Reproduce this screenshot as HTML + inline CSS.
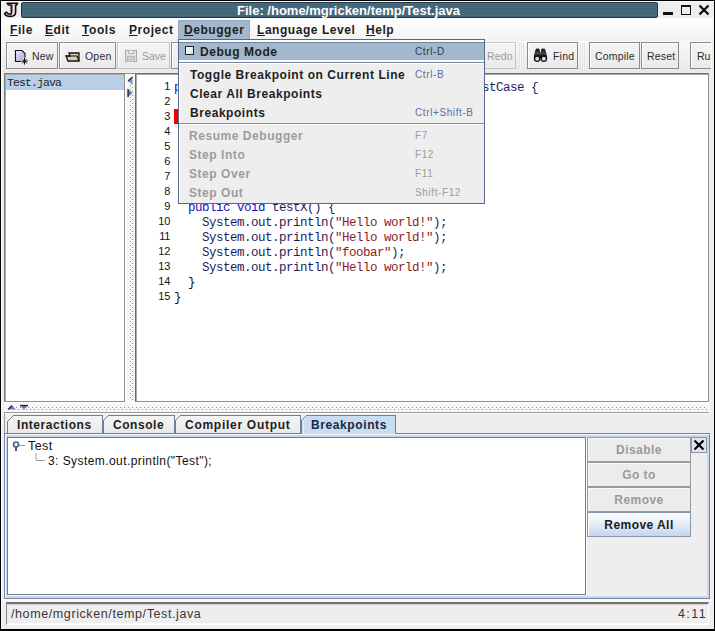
<!DOCTYPE html>
<html><head><meta charset="utf-8">
<style>
*{margin:0;padding:0;box-sizing:border-box}
html,body{width:715px;height:631px;overflow:hidden;background:#000}
body{position:relative;font-family:"Liberation Sans",sans-serif}
.a{position:absolute}
.t{position:absolute;white-space:pre;line-height:1}
.mb{font-weight:bold;font-size:12px;letter-spacing:0.55px;color:#1e1e1e}
.u{text-decoration:underline;text-underline-offset:1px}
.mono{font-family:"Liberation Mono",monospace}
.btn{position:absolute;top:42px;height:27px;border:1px solid #8a8a8a;background:linear-gradient(#f4f4f4,#eaeaea);box-shadow:inset 1px 1px 0 #fff}
.btn.dis{border-color:#c4c4c4}
.bt{position:absolute;white-space:pre;line-height:1;font-size:10.5px;letter-spacing:0.2px;color:#2c2c2c;top:51px}
.acc{position:absolute;white-space:pre;line-height:1;font-size:10px;letter-spacing:0.6px;color:#5c6e9a;left:415px}
.code{position:absolute;white-space:pre;line-height:15px;font-family:"Liberation Mono",monospace;font-size:12.5px;letter-spacing:-0.5px;color:#1e1e5a}
.ln{position:absolute;white-space:pre;line-height:15px;font-family:"Liberation Sans",sans-serif;font-size:11px;letter-spacing:-0.3px;color:#111;text-align:right}
.s{color:#8b1c1c}
.kw{color:#1515b8}
.blk{color:#111}
.tab{position:absolute;top:415px;height:19px;border-top:1px solid #7a8aa5;border-right:1px solid #7a8aa5;background:linear-gradient(#f6f6f6,#e8e8e8)}
.rb{position:absolute;left:587px;width:104px;height:25px;border:1px solid #9a9a9a;background:#ececec;box-shadow:inset 1px 1px 0 #fafafa}
.rt{position:absolute;white-space:pre;line-height:1;font-weight:bold;font-size:12px;letter-spacing:0.45px;color:#9a9a9a;text-align:center;left:587px;width:104px}
</style></head><body>
<!-- window -->
<div class="a" style="left:1px;top:1px;width:713px;height:628px;background:#eeeeee;border-left:1px solid #fbfbfb;border-top:1px solid #fbfbfb"></div>

<!-- J icon -->
<svg class="a" style="left:0px;top:0px" width="20" height="19" viewBox="0 0 20 19">
  <path d="M7.2 3.2 L17.6 3.2 L16.6 5 L15.6 5 L15.6 12.5 Q15.3 16.4 10.5 16.4 Q6 16.4 4.6 13.6 L6.4 12.2 Q8 14.2 10.2 14.2 Q11.6 14.2 11.6 11.5 L11.6 5 L8.4 5 Z" fill="#f2dde4" stroke="#140c0c" stroke-width="1.6" stroke-linejoin="round"/>
  <path d="M11.2 5.5 L11.2 12" stroke="#3a1018" stroke-width="1.2"/>
</svg>

<!-- title bar -->
<div class="a" style="left:21px;top:2px;width:637px;height:16px;background:repeating-linear-gradient(#4b6d82 0px,#4b6d82 1px,#406378 1px,#406378 2px);border:1px solid #1f3444;border-radius:2px"></div>
<div class="t" style="left:237px;top:4px;font-weight:bold;font-size:13px;color:#fff">File: /home/mgricken/temp/Test.java</div>
<!-- window buttons -->
<div class="a" style="left:663px;top:12px;width:10px;height:3px;background:#111"></div>
<div class="a" style="left:681px;top:5px;width:10px;height:10px;border:1.5px solid #111;border-top-width:2.5px"></div>
<svg class="a" style="left:698px;top:4px" width="12" height="12" viewBox="0 0 12 12"><path d="M1.5 1.5 L10.5 10.5 M10.5 1.5 L1.5 10.5" stroke="#111" stroke-width="2.4"/></svg>

<!-- menubar -->
<div class="a" style="left:2px;top:18px;width:711px;height:23px;background:linear-gradient(#ffffff,#f2f2f2)"></div>
<div class="t mb" style="left:10px;top:24px"><span class="u">F</span>ile</div>
<div class="t mb" style="left:45px;top:24px"><span class="u">E</span>dit</div>
<div class="t mb" style="left:82px;top:24px"><span class="u">T</span>ools</div>
<div class="t mb" style="left:129px;top:24px"><span class="u">P</span>roject</div>
<div class="a" style="left:178px;top:20px;width:72px;height:19px;background:#a3b8cc;border:1px solid #95a8c0;border-bottom:none"></div>
<div class="t mb" style="left:184px;top:24px"><span class="u">D</span>ebugger</div>
<div class="t mb" style="left:257px;top:24px"><span class="u">L</span>anguage Level</div>
<div class="t mb" style="left:366px;top:24px"><span class="u">H</span>elp</div>

<!-- toolbar -->
<div class="a" style="left:2px;top:41px;width:711px;height:31px;background:linear-gradient(#f8f8f8,#e9e9e9)"></div>
<div class="btn" style="left:6px;width:52px"></div>
<svg class="a" style="left:14px;top:49px" width="16" height="16" viewBox="0 0 16 16">
  <defs><linearGradient id="ng" x1="0" y1="0" x2="1" y2="1"><stop offset="0" stop-color="#f0f0ff"/><stop offset="1" stop-color="#9c9cd8"/></linearGradient></defs>
  <path d="M1.5 1.5 L8 1.5 L11 4.5 L11 12.5 L1.5 12.5 Z" fill="url(#ng)" stroke="#111" stroke-width="1.1"/>
  <circle cx="10.5" cy="12.2" r="3.6" fill="#f4f4f4"/>
  <path d="M10.5 8.8 L10.5 15.6 M7.1 12.2 L13.9 12.2 M8.2 9.9 L12.8 14.5 M12.8 9.9 L8.2 14.5" stroke="#111" stroke-width="1"/>
</svg>
<div class="bt" style="left:32px">New</div>
<div class="btn" style="left:59px;width:57px"></div>
<svg class="a" style="left:65px;top:51px" width="16" height="11" viewBox="0 0 16 11">
  <path d="M4 2 L14 2 L14 10 L3 10 L1 5 L5 5 Z" fill="#d9cfae" stroke="#111" stroke-width="1.3"/>
  <path d="M1 5 L12 5 L14 10" fill="none" stroke="#111" stroke-width="1.2"/>
</svg>
<div class="bt" style="left:85px">Open</div>
<div class="btn dis" style="left:117px;width:53px"></div>
<svg class="a" style="left:125px;top:50px" width="13" height="13" viewBox="0 0 13 13" shape-rendering="crispEdges">
  <rect x="0.5" y="0.5" width="11" height="11" fill="#e2e2e2" stroke="#aaaaaa"/>
  <rect x="3.5" y="0.5" width="5" height="3" fill="#eeeeee" stroke="#b4b4b4"/>
  <rect x="2.5" y="6.5" width="7" height="5" fill="#d6d6d6" stroke="#b8b8b8"/>
  <path d="M2.5 9 L9.5 9 M6 6.5 L6 11.5" stroke="#c4c4c4"/>
</svg>
<div class="bt" style="left:142px;color:#9c9c9c;letter-spacing:0">Save</div>
<div class="btn" style="left:171px;width:60px"></div>
<div class="btn dis" style="left:462px;width:54px"></div>
<div class="bt" style="left:487px;color:#9c9c9c">Redo</div>
<div class="a" style="left:519px;top:43px;width:5px;height:26px;background:repeating-linear-gradient(90deg,#e4e4e4 0,#e4e4e4 1px,#f6f6f6 1px,#f6f6f6 2px)"></div>
<div class="a" style="left:580px;top:43px;width:6px;height:26px;background:repeating-linear-gradient(90deg,#e4e4e4 0,#e4e4e4 1px,#f6f6f6 1px,#f6f6f6 2px)"></div>
<div class="btn" style="left:527px;width:51px"></div>
<svg class="a" style="left:533px;top:48px" width="15" height="15" viewBox="0 0 15 15">
  <defs><linearGradient id="bg1" x1="0" y1="0" x2="0" y2="1"><stop offset="0" stop-color="#111"/><stop offset="0.6" stop-color="#4a4a4a"/><stop offset="1" stop-color="#111"/></linearGradient></defs>
  <path d="M3.2 1 L6 1 L6.6 4 L7.4 8.5 L1.2 8.5 L2.4 4 Z" fill="url(#bg1)" stroke="#111" stroke-width="0.8"/>
  <path d="M8.8 1 L11.6 1 L12.4 4 L13.6 8.5 L7.4 8.5 L8.2 4 Z" fill="url(#bg1)" stroke="#111" stroke-width="0.8"/>
  <rect x="6" y="8" width="3" height="3" fill="#111"/>
  <circle cx="4.2" cy="10.6" r="3.4" fill="#111"/><circle cx="10.8" cy="10.6" r="3.4" fill="#111"/>
  <circle cx="4.2" cy="10.8" r="2" fill="#d8d8e4"/><circle cx="10.8" cy="10.8" r="2" fill="#d8d8e4"/>
</svg>
<div class="bt" style="left:553px">Find</div>
<div class="btn" style="left:589px;width:51px"></div>
<div class="bt" style="left:595px">Compile</div>
<div class="btn" style="left:641px;width:38px"></div>
<div class="bt" style="left:647px">Reset</div>
<div class="a" style="left:690px;top:0;width:21px;height:80px;overflow:hidden">
<div class="btn" style="left:0px;width:30px"></div>
<div class="bt" style="left:7px;letter-spacing:0px">Run</div>
</div>
<div class="a" style="left:711px;top:41px;width:2px;height:32px;background:#ececec;border-left:1px solid #f8f8f8"></div>

<!-- file list -->
<div class="a" style="left:4px;top:73px;width:121px;height:329px;background:#fff;border:1px solid #767e86;border-right-color:#8e8e8e;border-bottom-color:#8e8e8e;box-shadow:inset 1px 1px 0 #a4aab0"></div>
<div class="a" style="left:6px;top:75px;width:118px;height:15px;background:#b8cfe5"></div>
<div class="t mono" style="left:7px;top:77px;font-size:11.5px;letter-spacing:-0.9px;color:#1c2230">Test.java</div>

<!-- vertical splitter -->
<div class="a" style="left:125px;top:74px;width:10px;height:328px;background:#f7f7f7;border-left:1px solid #fff"></div>
<svg class="a" style="left:125px;top:73px" width="10" height="329" viewBox="0 0 10 329" shape-rendering="crispEdges">
  <defs><pattern id="pv" x="0" y="0" width="4" height="4" patternUnits="userSpaceOnUse"><rect x="1" y="0" width="1" height="1" fill="#8c8c8c"/><rect x="3" y="2" width="1" height="1" fill="#8c8c8c"/></pattern></defs>
  <rect x="4" y="12" width="4" height="316" fill="url(#pv)"/>
</svg>
<svg class="a" style="left:126px;top:76px" width="8" height="22" viewBox="0 0 8 22">
  <path d="M6.5 1 L2 5 L6.5 9 Z" fill="#8393b8"/><path d="M6.5 1 L2 5" stroke="#1e2a4a" stroke-width="1.3"/>
  <path d="M2 13 L6.5 17 L2 21 Z" fill="#6676a0"/><path d="M2 13 L2 21" stroke="#1e2a4a" stroke-width="1.3"/>
</svg>

<!-- editor -->
<div class="a" style="left:135px;top:73px;width:574px;height:329px;background:#fff;border:1px solid #6e6e6e;border-right-color:#8e8e8e;border-bottom-color:#8e8e8e;box-shadow:inset 1px 1px 0 #a8a8a8"></div>
<div class="a" style="left:125px;top:73px;width:10px;height:1px;background:#8d8d8d"></div>
<div class="ln" style="left:139px;top:79px;width:31px">1
2
3
4
5
6
7
8
9
10
11
12
13
14
15</div>
<div class="a" style="left:174px;top:109px;width:5px;height:15px;background:#ee0000"></div>
<div class="code" style="left:174px;top:81px"><span class="kw">public class</span> Test <span class="kw">extends</span> junit.framework.TestCase {
  
  
  
  
  
  
  
  <span class="kw">public void</span> testX() {
    System.out.println(<span class="s">"Hello world!"</span>);
    System.out.println(<span class="s">"Hello world!"</span>);
    System.out.println(<span class="s">"foobar"</span>);
    System.out.println(<span class="s">"Hello world!"</span>);
<span class="blk">  }</span>
<span class="blk">}</span></div>

<!-- horizontal splitter -->
<div class="a" style="left:4px;top:402px;width:706px;height:10px;background:#f7f7f7;border-top:1px solid #fff"></div>
<svg class="a" style="left:4px;top:402px" width="706" height="10" viewBox="0 0 706 10" shape-rendering="crispEdges">
  <defs><pattern id="ph" x="0" y="0" width="4" height="4" patternUnits="userSpaceOnUse"><rect x="0" y="1" width="1" height="1" fill="#8c8c8c"/><rect x="2" y="3" width="1" height="1" fill="#8c8c8c"/></pattern></defs>
  <rect x="12" y="4" width="692" height="4" fill="url(#ph)"/>
</svg>
<div class="a" style="left:4px;top:412px;width:705px;height:1px;background:#9a9a9a"></div>
<svg class="a" style="left:6px;top:403px" width="26" height="8" viewBox="0 0 26 8">
  <path d="M2 6.5 L6 2.5 L10 6.5 Z" fill="#6878a0"/><path d="M2 6.5 L6 2.5" stroke="#1e2a4a" stroke-width="1.3"/>
  <path d="M14 2.5 L22 2.5 L18 6.5 Z" fill="#6878a0"/><path d="M14 2.5 L22 2.5" stroke="#1e2a4a" stroke-width="1.3"/>
</svg>

<!-- tabbed pane -->
<div class="a" style="left:4px;top:413px;width:706px;height:20px;background:#eeeeee;border-top:1px solid #fafafa;border-left:1px solid #9a9a9a"></div>
<div class="a" style="left:4px;top:433px;width:706px;height:166px;background:#c9d7eb;border:1px solid #7888a8;border-top-color:#6a7ca0;box-shadow:inset 1px 1px 0 #f6faff"></div>
<svg class="a" style="left:0px;top:413px" width="400" height="22" viewBox="0 0 400 22" shape-rendering="crispEdges">
  <defs>
    <linearGradient id="tg" x1="0" y1="0" x2="0" y2="1"><stop offset="0" stop-color="#f4f4f4"/><stop offset="1" stop-color="#e9e9e9"/></linearGradient>
  </defs>
  <path d="M7.5 20.5 L7.5 8.5 L13.5 2.5 L102.5 2.5 L102.5 20.5 Z" fill="url(#tg)" stroke="#6f7f9c"/>
  <path d="M103.5 20.5 L103.5 7.5 L108.5 2.5 L174.5 2.5 L174.5 20.5" fill="url(#tg)" stroke="#6f7f9c"/>
  <path d="M175.5 20.5 L175.5 7.5 L180.5 2.5 L300.5 2.5 L300.5 20.5" fill="url(#tg)" stroke="#6f7f9c"/>
  <path d="M301.5 21 L301.5 7.5 L306.5 2.5 L395.5 2.5 L395.5 21" fill="#c8dcf2" stroke="#6f7f9c"/>
  <path d="M303 21 L303 8 L307 3" fill="none" stroke="#e4eefa"/>
</svg>
<div class="t mb" style="left:17px;top:419px;letter-spacing:0.55px">Interactions</div>
<div class="t mb" style="left:113px;top:419px">Console</div>
<div class="t mb" style="left:185px;top:419px;letter-spacing:0.72px">Compiler Output</div>
<div class="t mb" style="left:311px;top:419px;letter-spacing:0.6px;color:#1a2a40">Breakpoints</div>
<div class="a" style="left:396px;top:433px;width:314px;height:1px;background:#6f7f9c"></div>
<div class="a" style="left:4px;top:433px;width:298px;height:1px;background:#6f7f9c"></div>

<div class="a" style="left:7px;top:437px;width:700px;height:158px;background:#eeeeee;border-top:1px solid #7a8090;border-left:1px solid #7a8090;box-shadow:0 1px 0 #eef4fa"></div>
<div class="a" style="left:7px;top:437px;width:579px;height:158px;background:#fff;border:1px solid #6f7d8e;box-shadow:1px 0 0 #fff"></div>

<!-- tree -->
<svg class="a" style="left:12px;top:441px" width="36" height="22" viewBox="0 0 36 22">
  <circle cx="4" cy="3.5" r="2.5" fill="none" stroke="#4a5c88" stroke-width="1.6"/>
  <path d="M4 6 L4 10" stroke="#4a5c88" stroke-width="2"/>
  <path d="M7 4.5 L13 4.5" stroke="#99a" stroke-width="1"/>
  <path d="M24 12 L24 19.5 L33 19.5" fill="none" stroke="#9aa0b0" stroke-width="1"/>
</svg>
<div class="t" style="left:28px;top:440px;font-size:12.5px;letter-spacing:0.4px;color:#111">Test</div>
<div class="t" style="left:48px;top:455px;font-size:12px;letter-spacing:0.43px;color:#111">3: System.out.println("Test");</div>

<!-- right buttons -->
<div class="rb" style="top:437px"></div>
<div class="rt" style="top:444px">Disable</div>
<div class="rb" style="top:462px"></div>
<div class="rt" style="top:469px">Go to</div>
<div class="rb" style="top:487px"></div>
<div class="rt" style="top:494px">Remove</div>
<div class="rb" style="top:512px;background:linear-gradient(#ffffff,#dce8f4 60%,#c4d6ea);border-color:#8a96a8"></div>
<div class="rt" style="top:519px;color:#1a1a2a">Remove All</div>
<div class="a" style="left:691px;top:437px;width:16px;height:16px;background:#dfe5ee;border:1px solid #8a96a8"></div>
<svg class="a" style="left:693px;top:439px" width="12" height="12" viewBox="0 0 12 12"><path d="M1.5 1.5 L10.5 10.5 M10.5 1.5 L1.5 10.5" stroke="#000" stroke-width="2.2"/></svg>

<!-- status bar -->
<div class="a" style="left:2px;top:599px;width:711px;height:3px;background:#f8f8f8"></div>
<div class="a" style="left:6px;top:602px;width:703px;height:23px;background:#eeeeee;border-left:1px solid #8a8a8a;border-top:2px solid #767270;border-right:1px solid #fff;border-bottom:1px solid #fff;box-shadow:inset 0 1px 0 #d4d2d0,inset 0 -1px 0 #fafafa"></div>
<div class="t" style="left:11px;top:608px;font-size:12.5px;letter-spacing:0.6px;color:#383838">/home/mgricken/temp/Test.java</div>
<div class="t" style="left:678px;top:608px;font-size:12.5px;letter-spacing:1.4px;color:#383838">4:11</div>

<!-- menu popup -->
<div class="a" style="left:178px;top:39px;width:307px;height:165px;background:#eeeeee;border:1px solid #56668c;box-shadow:inset 1px 1px 0 #fff"></div>
<div class="a" style="left:179px;top:40px;width:305px;height:22px;background:#fcfcfc"></div>
<div class="a" style="left:179px;top:42px;width:305px;height:18px;background:#a3b8cc;border-top:1px solid #6f86a4"></div>
<div class="a" style="left:185px;top:46px;width:9px;height:9px;border:1px solid #222;background:linear-gradient(135deg,#fff,#d8e0ea)"></div>
<div class="t mb" style="left:200px;top:46px">Debug Mode</div>
<div class="acc" style="top:47px;color:#303848">Ctrl-D</div>
<div class="a" style="left:179px;top:62px;width:305px;height:1px;background:#7a8aa8"></div>
<div class="a" style="left:179px;top:63px;width:305px;height:1px;background:#fff"></div>
<div class="t mb" style="left:190px;top:69px">Toggle Breakpoint on Current Line</div>
<div class="acc" style="top:70px">Ctrl-B</div>
<div class="t mb" style="left:190px;top:88px">Clear All Breakpoints</div>
<div class="t mb" style="left:190px;top:107px">Breakpoints</div>
<div class="acc" style="top:108px">Ctrl+Shift-B</div>
<div class="a" style="left:179px;top:123px;width:305px;height:1px;background:#7a8aa8"></div>
<div class="a" style="left:179px;top:124px;width:305px;height:1px;background:#fff"></div>
<div class="t mb" style="left:189px;top:130px;color:#9c9c9c">Resume Debugger</div>
<div class="acc" style="top:131px;color:#9c9c9c">F7</div>
<div class="t mb" style="left:189px;top:149px;color:#9c9c9c">Step Into</div>
<div class="acc" style="top:150px;color:#9c9c9c">F12</div>
<div class="t mb" style="left:189px;top:168px;color:#9c9c9c">Step Over</div>
<div class="acc" style="top:169px;color:#9c9c9c">F11</div>
<div class="t mb" style="left:189px;top:187px;color:#9c9c9c">Step Out</div>
<div class="acc" style="top:188px;color:#9c9c9c">Shift-F12</div>
</body></html>
